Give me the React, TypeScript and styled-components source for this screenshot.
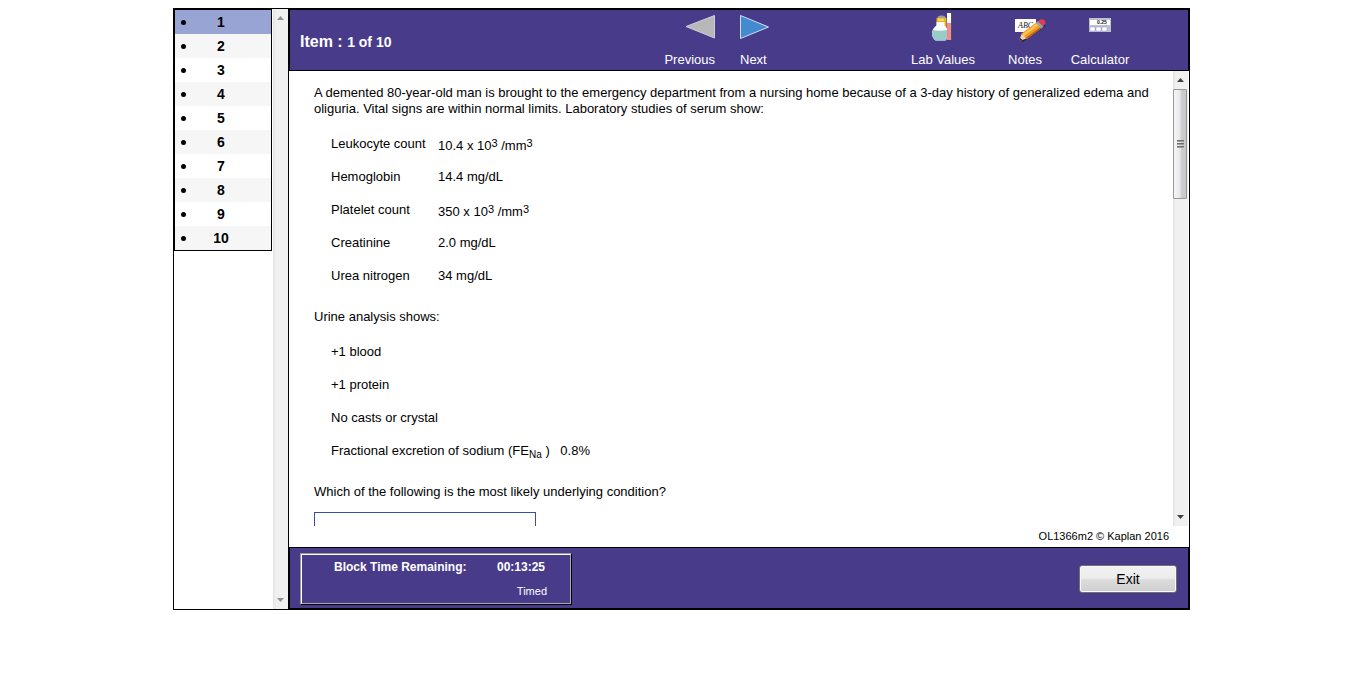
import React from "react";
import styled, { createGlobalStyle } from "styled-components";

const PURPLE = "#483c8a";

const GlobalStyle = createGlobalStyle`
  *, *::before, *::after { box-sizing: border-box; }
  body {
    margin: 0;
    background: #fff;
    color: #000;
    font: 13px/16px "Liberation Sans", Arial, sans-serif;
  }
`;

const Page = styled.div`
  padding: 8px 11px 8px 8px;
`;

const Frame = styled.div`
  display: flex;
  width: 100%;
  max-width: 1017px;
  height: calc(100vh - 95px);
  min-height: 400px;
  margin: 0 auto;
  border: 1px solid #000;
`;

const Sidebar = styled.nav`
  display: flex;
  justify-content: space-between;
  flex: none;
  width: 115px;
  border-right: 1px solid #000;
`;

const ItemList = styled.ul`
  align-self: flex-start;
  width: 98px;
  margin: -1px 0 0 0;
  padding: 0;
  border: 1px solid #000;
  border-width: 2px 1px 1px 1px;
  list-style: none;
`;

const Item = styled.li<{ $active?: boolean }>`
  background: ${(p) => (p.$active ? "#98a4d4" : "#fff")};
  &:nth-child(even) {
    background: #f6f6f6;
  }
`;

const ItemLink = styled.a`
  display: flex;
  align-items: center;
  height: 24px;
  padding-left: 6px;
  color: #000;
  font-size: 14px;
  font-weight: bold;
  text-decoration: none;
  &::before {
    content: "";
    width: 5px;
    height: 5px;
    border-radius: 3px;
    background: #000;
  }
`;

const ItemNumber = styled.span`
  width: 70px;
  text-align: center;
`;

const Track = styled.div`
  display: flex;
  flex-direction: column;
  flex: none;
  width: 15px;
  background: linear-gradient(90deg, #e4e4e4, #f0f0f0 3px);
`;

const TrackArrow = styled.button<{ $end?: boolean }>`
  display: flex;
  align-items: center;
  justify-content: center;
  width: 15px;
  height: 18px;
  margin: ${(p) => (p.$end ? "auto 0 0" : "0")};
  padding: 0;
  border: 0;
  background: none;
`;

const Thumb = styled.div`
  display: flex;
  flex-direction: column;
  align-items: center;
  justify-content: center;
  gap: 1px;
  width: 14px;
  height: 110px;
  border: 1px solid #979797;
  border-radius: 1px;
  background: linear-gradient(90deg, #f6f6f6, #e8e8e9 50%, #cfcfd2 60%, #c8c8cc);
`;

const Grip = styled.span`
  width: 7px;
  height: 2px;
  background: linear-gradient(#555, #bbb);
`;

const Main = styled.main`
  display: flex;
  flex-direction: column;
  flex: 1;
  min-width: 0;
`;

const Header = styled.header`
  display: flex;
  align-items: stretch;
  flex: none;
  height: 62px;
  padding: 0 54px 0 10px;
  border: 1px solid #000;
  background: ${PURPLE};
  color: #fff;
`;

const Title = styled.h1`
  flex: 1;
  align-self: center;
  margin: 3px 0 0;
  font-size: 16px;
  line-height: 18px;
`;

const TitleCount = styled.span`
  font-size: 14px;
`;

const NavGroup = styled.div`
  display: flex;
  gap: 25px;
  margin-right: 112px;
`;

const ToolGroup = styled.div`
  display: flex;
`;

const BarButton = styled.button<{ $width: number; $align: string }>`
  display: flex;
  flex-direction: column;
  align-items: ${(p) => p.$align};
  width: ${(p) => p.$width}px;
  padding: 2px 0 0;
  border: 0;
  background: none;
  color: #fff;
  font: inherit;
  white-space: nowrap;
`;

const IconSlot = styled.span`
  display: flex;
  height: 40px;
`;

const Body = styled.div`
  display: flex;
  flex: 1;
  min-height: 0;
  padding-right: 1px;
`;

const Question = styled.article`
  flex: 1;
  min-width: 0;
  padding: 14px 20px 0 25px;
  overflow: hidden;
`;

const Paragraph = styled.p`
  margin: 0;
`;

const DataTable = styled.table`
  margin: 10px 0 17px 17px;
  border-spacing: 0;
  td, th {
    height: 33px;
    padding: 0;
    font-weight: normal;
    text-align: left;
    white-space: nowrap;
  }
  th { width: 107px; }
  sup { font-size: 11px; line-height: 18px; vertical-align: 3px; }
`;

const Findings = styled.ul`
  margin: 10px 0 17px 17px;
  padding: 0;
  list-style: none;
  li {
    height: 33px;
    line-height: 33px;
  }
  sub { font-size: 10px; line-height: 11px; vertical-align: -3px; }
`;

const Value = styled.span`
  margin-left: 7px;
`;

const AnswerBox = styled.div`
  width: 222px;
  height: 160px;
  margin-top: 12px;
  border: 1px solid #3850a0;
`;

const Credit = styled.small`
  flex: none;
  height: 21px;
  padding: 2px 20px 0 0;
  font-size: 11px;
  text-align: right;
`;

const Footer = styled.footer`
  display: flex;
  align-items: center;
  justify-content: space-between;
  flex: none;
  height: 62px;
  padding: 1px 11px 0 10px;
  border: 1px solid #000;
  background: ${PURPLE};
  color: #fff;
`;

const TimerFrame = styled.div`
  width: 272px;
  height: 52px;
  border: 1px solid;
  border-color: #999 #000 #000 #999;
`;

const Timer = styled.div`
  display: grid;
  grid-template-columns: 163px 1fr;
  align-content: start;
  row-gap: 8px;
  height: 100%;
  padding: 4px 23px 0 32px;
  border: 1px solid;
  border-color: #fff #aaa #aaa #fff;
`;

const TimerText = styled.strong`
  font-size: 12px;
`;

const TimerMode = styled.span`
  grid-column: 2;
  font-size: 11px;
  text-align: right;
`;

const ExitButton = styled.button`
  width: 98px;
  height: 28px;
  padding: 0;
  border: 1px solid #707070;
  border-radius: 3px;
  background: linear-gradient(#f2f2f2, #ebebeb 48%, #dddddd 50%, #cfcfcf);
  box-shadow: inset 0 0 0 1px #f8f8f8;
  color: #000;
  font: 14px/16px "Liberation Sans", Arial, sans-serif;
`;

const ArrowGlyph = ({ down, color }: { down?: boolean; color: string }) => (
  <svg width="7" height="4" viewBox="0 0 7 4" aria-hidden="true">
    <path d={down ? "M0 0h7L3.5 4z" : "M0 4h7L3.5 0z"} fill={color} />
  </svg>
);

const PreviousIcon = () => (
  <svg width="30" height="30" viewBox="0 0 30 30" aria-hidden="true">
    <path d="M1 14.500 29.500 3.500v22.500z" fill="#b8b8b8" stroke="#cfcbe0" />
  </svg>
);

const NextIcon = () => (
  <svg width="30" height="30" viewBox="0 0 30 30" aria-hidden="true">
    <path d="M.5 3.500 28.500 15 .5 26.500z" fill="#438bd0" stroke="#d3dcf2" />
  </svg>
);

const LabIcon = () => (
  <svg width="22" height="30" viewBox="0 0 22 30" aria-hidden="true">
    <path d="M5.500 5C7 3 12 3 13.500 5v2h-8z" fill="#a39d94" />
    <path d="M4.500 6h10v11h-10z" fill="#e9b41f" />
    <path d="M6 6.500h6v2.500h-6z" fill="#f8d65c" />
    <path d="M4.500 10h8v3.500c2.200 1.500 3.500 4.500 3.500 8 0 3-1 5.500-2.500 7h-10C1.500 27 0 24.500 0 21.500c0-3.500 2-6.500 4.500-8z" fill="#fafcfc" />
    <path d="M1 18c3.500 1 10 1 13.500 0C17 22.500 16 26.500 13.500 28.500h-10C.3 26.500-.8 22 1 18z" fill="#98cbca" />
    <path d="M15 1h4v27h-4z" fill="#fff" />
    <path d="M15 11h4v17h-4z" fill="#f08c8e" />
    <path d="M19.500 1v27" stroke="#554c66" />
  </svg>
);

const NotesIcon = () => (
  <svg width="42" height="32" viewBox="-6 0 42 32" aria-hidden="true">
    <path d="M5 7h21v13H5z" fill="#fff" />
    <text x="8" y="16" fontFamily="Liberation Serif, serif" fontSize="8" fontStyle="italic" fill="#222">
      ABC
    </text>
    <path d="M12 29.500 35 13.500" stroke="#2c2458" strokeWidth="2" />
    <path d="m9 29 3-8 6 5z" fill="#f4d6a2" />
    <path d="m9 29 1.300-3 2 2z" fill="#222" />
    <path d="M11.500 21.500 27 10l5.500 5.500L17 27z" fill="#f29a26" />
    <path d="m12.300 22.300 16-12 1.700 1.700-16 12z" fill="#ffc458" />
    <path d="m15.500 26 16.500-12 1 1-16 12z" fill="#ad641a" />
    <path d="m26 11 2-2 5.500 5.500-2 2z" fill="#8ea6aa" />
    <path d="m28 9 2.500-1.500c3-1 6 1.500 4.500 4.500L33 14.500z" fill="#dd4050" />
  </svg>
);

const CalculatorIcon = () => (
  <svg width="24" height="30" viewBox="0 0 24 30" aria-hidden="true">
    <path d="M1 6h22v14H1z" fill="#bfc1ce" />
    <path d="M2 8h20v5H2z" fill="#fff" />
    <text x="9" y="12" fontFamily="Liberation Sans, sans-serif" fontSize="5" fontWeight="bold" fill="#111">
      0.25
    </text>
    <path d="M2 15h5v4H2zM8 15h5v4H8zM14 15h5v4h-5z" fill="#fff" stroke="#8f9bd0" strokeWidth=".5" />
  </svg>
);

const Cubic = () => (
  <>
    {" "}x 10<sup>3</sup> /mm<sup>3</sup>
  </>
);

const labs: { name: string; value: React.ReactNode }[] = [
  { name: "Leukocyte count", value: <>10.4<Cubic /></> },
  { name: "Hemoglobin", value: "14.4 mg/dL" },
  { name: "Platelet count", value: <>350<Cubic /></> },
  { name: "Creatinine", value: "2.0 mg/dL" },
  { name: "Urea nitrogen", value: "34 mg/dL" },
];

const items = Array.from({ length: 10 }, (_, i) => i + 1);

export default function App() {
  return (
    <Page>
      <GlobalStyle />
      <Frame>
        <Sidebar aria-label="Items">
          <ItemList>
            {items.map((n) => (
              <Item key={n} $active={n === 1}>
                <ItemLink href={`#item-${n}`}>
                  <ItemNumber>{n}</ItemNumber>
                </ItemLink>
              </Item>
            ))}
          </ItemList>
          <Track>
            <TrackArrow aria-label="Scroll items up">
              <ArrowGlyph color="#909090" />
            </TrackArrow>
            <TrackArrow $end aria-label="Scroll items down">
              <ArrowGlyph down color="#909090" />
            </TrackArrow>
          </Track>
        </Sidebar>
        <Main>
          <Header>
            <Title>
              Item : <TitleCount>1 of 10</TitleCount>
            </Title>
            <NavGroup>
              <BarButton $width={50} $align="flex-end">
                <IconSlot><PreviousIcon /></IconSlot>
                Previous
              </BarButton>
              <BarButton $width={50} $align="flex-start">
                <IconSlot><NextIcon /></IconSlot>
                Next
              </BarButton>
            </NavGroup>
            <ToolGroup>
              <BarButton $width={82} $align="center">
                <IconSlot><LabIcon /></IconSlot>
                Lab Values
              </BarButton>
              <BarButton $width={82} $align="center">
                <IconSlot><NotesIcon /></IconSlot>
                Notes
              </BarButton>
              <BarButton $width={68} $align="center">
                <IconSlot><CalculatorIcon /></IconSlot>
                Calculator
              </BarButton>
            </ToolGroup>
          </Header>
          <Body>
            <Question>
              <Paragraph>
                A demented 80-year-old man is brought to the emergency department from a nursing home because of a 3-day
                history of generalized edema and oliguria. Vital signs are within normal limits. Laboratory studies of
                serum show:
              </Paragraph>
              <DataTable>
                <tbody>
                  {labs.map((lab) => (
                    <tr key={lab.name}>
                      <th scope="row">{lab.name}</th>
                      <td>{lab.value}</td>
                    </tr>
                  ))}
                </tbody>
              </DataTable>
              <Paragraph>Urine analysis shows:</Paragraph>
              <Findings>
                <li>+1 blood</li>
                <li>+1 protein</li>
                <li>No casts or crystal</li>
                <li>
                  Fractional excretion of sodium (FE<sub>Na</sub> ) <Value>0.8%</Value>
                </li>
              </Findings>
              <Paragraph>Which of the following is the most likely underlying condition?</Paragraph>
              <AnswerBox />
            </Question>
            <Track>
              <TrackArrow aria-label="Scroll question up">
                <ArrowGlyph color="#404040" />
              </TrackArrow>
              <Thumb>
                <Grip />
                <Grip />
                <Grip />
              </Thumb>
              <TrackArrow $end aria-label="Scroll question down">
                <ArrowGlyph down color="#404040" />
              </TrackArrow>
            </Track>
          </Body>
          <Credit>OL1366m2 © Kaplan 2016</Credit>
          <Footer>
            <TimerFrame>
              <Timer>
                <TimerText>Block Time Remaining:</TimerText>
                <TimerText>00:13:25</TimerText>
                <TimerMode>Timed</TimerMode>
              </Timer>
            </TimerFrame>
            <ExitButton>Exit</ExitButton>
          </Footer>
        </Main>
      </Frame>
    </Page>
  );
}
